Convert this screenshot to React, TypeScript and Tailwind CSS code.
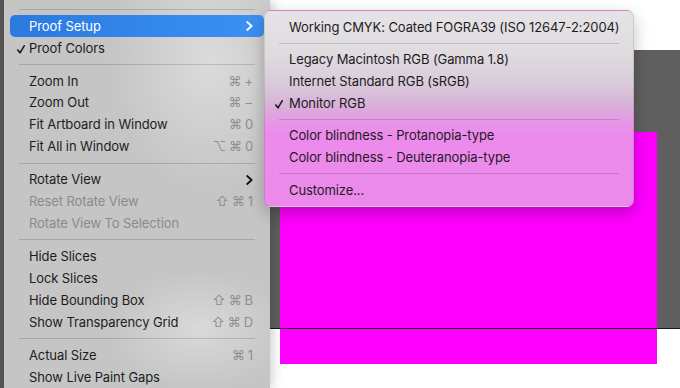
import React from 'react';

type Item =
  | { sep: true }
  | { label: string; keys?: string[]; checked?: boolean; sub?: boolean; active?: boolean; disabled?: boolean };

const mainItems: Item[] = [
  { sep: true },
  { label: 'Proof Setup', sub: true, active: true },
  { label: 'Proof Colors', checked: true },
  { sep: true },
  { label: 'Zoom In', keys: ['⌘', '+'] },
  { label: 'Zoom Out', keys: ['⌘', '−'] },
  { label: 'Fit Artboard in Window', keys: ['⌘', '0'] },
  { label: 'Fit All in Window', keys: ['⌥', '⌘', '0'] },
  { sep: true },
  { label: 'Rotate View', sub: true },
  { label: 'Reset Rotate View', keys: ['⇧', '⌘', '1'], disabled: true },
  { label: 'Rotate View To Selection', disabled: true },
  { sep: true },
  { label: 'Hide Slices' },
  { label: 'Lock Slices' },
  { label: 'Hide Bounding Box', keys: ['⇧', '⌘', 'B'] },
  { label: 'Show Transparency Grid', keys: ['⇧', '⌘', 'D'] },
  { sep: true },
  { label: 'Actual Size', keys: ['⌘', '1'] },
  { label: 'Show Live Paint Gaps' },
];

const proofItems: Item[] = [
  { label: 'Working CMYK: Coated FOGRA39 (ISO 12647-2:2004)' },
  { sep: true },
  { label: 'Legacy Macintosh RGB (Gamma 1.8)' },
  { label: 'Internet Standard RGB (sRGB)' },
  { label: 'Monitor RGB', checked: true },
  { sep: true },
  { label: 'Color blindness - Protanopia-type' },
  { label: 'Color blindness - Deuteranopia-type' },
  { sep: true },
  { label: 'Customize...' },
];

function Check({ className }: { className?: string }) {
  return (
    <svg width="8" height="9" viewBox="0 0 8 9" className={className} fill="none">
      <polyline points="0.8,5 3,7.8 7.2,0.8" stroke="currentColor" strokeWidth="1.6" strokeLinecap="round" strokeLinejoin="round" />
    </svg>
  );
}

function Chevron({ className }: { className?: string }) {
  return (
    <svg width="7" height="10" viewBox="0 0 7 10" className={className} fill="none">
      <polyline points="1.2,1 5.6,5 1.2,9" stroke="currentColor" strokeWidth="1.8" strokeLinecap="round" strokeLinejoin="round" />
    </svg>
  );
}

function MainRow({ item }: { item: Item }) {
  if ('sep' in item) {
    return (
      <div className="h-[11px] flex items-center mx-[15px]">
        <div className="h-px w-full bg-black/15" />
      </div>
    );
  }
  const base = item.active
    ? 'bg-[linear-gradient(to_right,#2a7ae0,#3c91f3)] text-white rounded-[5px]'
    : item.disabled
    ? 'text-[#8b8b8b]'
    : 'text-[#1d1d1d]';
  return (
    <div className={`relative h-[22px] mx-[6px] flex items-center pt-px pl-[19px] pr-[11px] whitespace-nowrap ${base}`}>
      {item.checked && <Check className="absolute left-[7px] top-[8px]" />}
      <span className="flex-1">{item.label}</span>
      {item.keys && (
        <span className="flex items-center gap-[3px] text-[#8e8e8e]">
          {item.keys.map((k, i) => (
            <span key={i}>{k}</span>
          ))}
        </span>
      )}
      {item.sub && <Chevron className={item.active ? 'text-white' : 'text-[#111]'} />}
    </div>
  );
}

function SubRow({ item }: { item: Item }) {
  if ('sep' in item) {
    return (
      <div className="h-[11px] flex items-center mx-[14px]">
        <div className="h-px w-full bg-black/15" />
      </div>
    );
  }
  return (
    <div className="relative h-[22px] flex items-center pt-px pl-[24px] whitespace-nowrap text-[#1f1a1f]">
      {item.checked && <Check className="absolute left-[10px] top-[8px]" />}
      <span>{item.label}</span>
    </div>
  );
}

export default function App() {
  return (
    <div className="relative w-[680px] h-[388px] overflow-hidden flex bg-white text-[13px] tracking-[-0.1px] font-['Inter','Liberation_Sans',sans-serif]">
      {/* window edge */}
      <div className="w-[4px] bg-[#555]" />

      {/* main View menu */}
      <div className="relative z-10 w-[266px] flex flex-col bg-[#c5c5c5] bg-[radial-gradient(ellipse_100px_130px_at_205px_60px,rgba(255,255,255,0.38),transparent),radial-gradient(ellipse_90px_60px_at_195px_330px,rgba(255,255,255,0.35),transparent)] shadow-[3px_0_10px_rgba(0,0,0,0.18)]">
        <div className="h-[4px]" />
        {mainItems.map((item, i) => (
          <MainRow key={i} item={item} />
        ))}
      </div>

      {/* artboard canvas */}
      <div className="relative flex-1 flex flex-col">
        <div className="h-[50px] bg-white" />
        <div className="h-[278px] bg-[#5f5f5f]" />
        <div className="flex-1 bg-white" />
        <div className="absolute left-[10px] top-[132px] w-[377px] h-[232px] bg-[#ff00ff]" />
        <div className="absolute left-0 right-0 top-[328px] h-px bg-[#1a1a1a]" />
      </div>

      {/* Proof Setup submenu */}
      <div className="absolute z-20 left-[264px] top-[10px] w-[370px] h-[197px] flex flex-col py-[5px] rounded-[7px] border border-black/10 shadow-[0_6px_16px_rgba(0,0,0,0.25)] bg-[linear-gradient(to_bottom,#e5e3e5_0%,#e0dde0_18%,#dcd6dc_28%,#d9c9d9_38%,#d8b2d8_48%,#e49ae4_56%,#ec8bec_63%,#ec8aec_100%)]">
        {proofItems.map((item, i) => (
          <SubRow key={i} item={item} />
        ))}
      </div>
    </div>
  );
}
